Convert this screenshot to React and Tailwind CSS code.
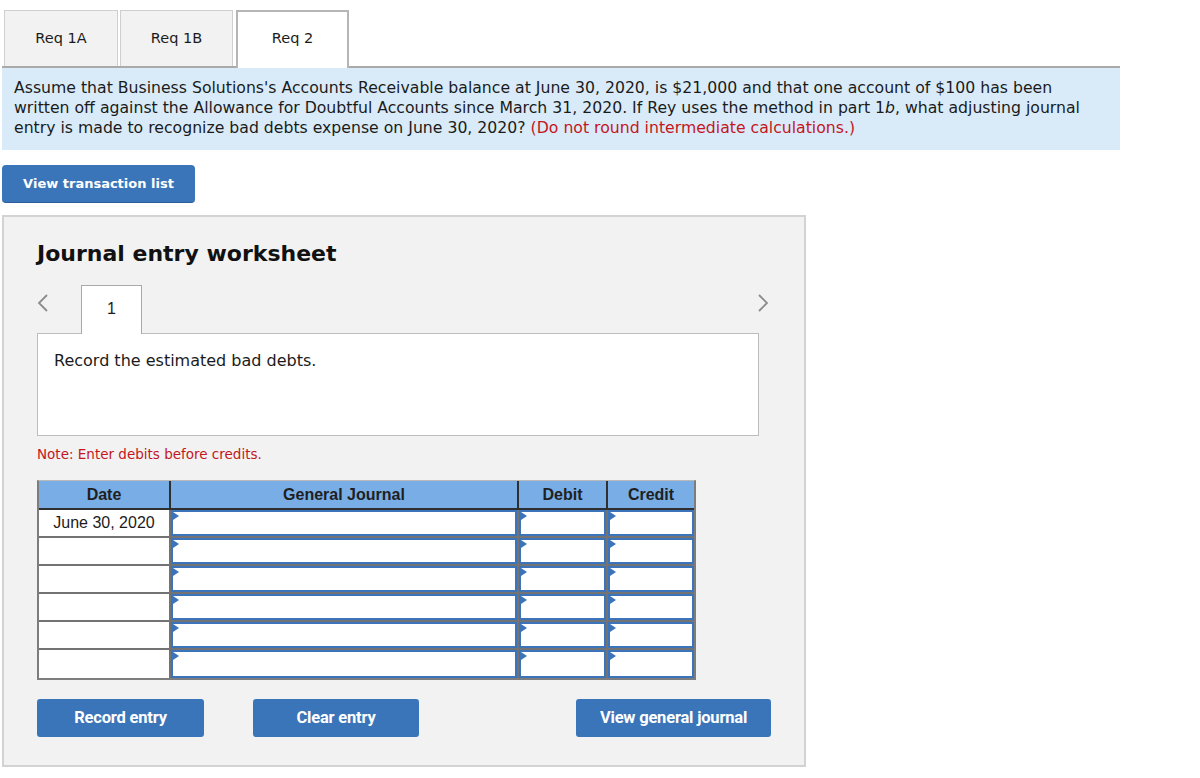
import React from "react";

const Arrow = () => (
  <span className="absolute left-0 top-0 w-0 h-0 border-y-[4px] border-y-transparent border-l-[6px] border-l-[#3b74ba]" />
);

function InputCell({ w, last }) {
  return (
    <div className={`${w} h-full ${last ? "" : "border-r-2 border-[#737373]"}`}>
      <div className="relative h-full bg-white border-2 border-[#3b74ba]">
        <Arrow />
      </div>
    </div>
  );
}

export default function App() {
  const rows = ["June 30, 2020", "", "", "", "", ""];

  return (
    <div className="w-[1200px] h-[778px] bg-white text-[#1b1b1b] font-['DejaVu_Sans',sans-serif]">
      {/* TOP TABS + QUESTION */}
      <div className="w-[1118px] ml-[2px] pt-[10px]">
        <div className="flex gap-[2px] pl-[2px] border-b-2 border-[#aaaaaa]">
          <div className="w-[114px] h-[56px] flex items-center justify-center bg-[#f2f2f2] border border-[#cfcfcf] border-b-0 text-[14.5px]">
            Req 1A
          </div>
          <div className="w-[113px] h-[56px] flex items-center justify-center bg-[#f2f2f2] border border-[#cfcfcf] border-b-0 text-[14.5px]">
            Req 1B
          </div>
          <div className="w-[113px] h-[58px] -mb-[2px] ml-[1px] flex items-center justify-center bg-white border-2 border-[#b5b5b5] border-b-0 text-[14.5px] pb-[2px]">
            Req 2
          </div>
        </div>
        <div className="bg-[#d9ebf9] pl-[12px] pt-[10px] pb-[12px] text-[15.7px] leading-[20px]">
          Assume that Business Solutions's Accounts Receivable balance at June 30, 2020, is $21,000 and that one account of $100 has been
          <br />
          written off against the Allowance for Doubtful Accounts since March 31, 2020. If Rey uses the method in part 1<i>b</i>, what adjusting journal
          <br />
          entry is made to recognize bad debts expense on June 30, 2020?{" "}
          <span className="text-[#c4161c]">(Do not round intermediate calculations.)</span>
        </div>
      </div>

      {/* TRANSACTION LIST BUTTON */}
      <button className="mt-[15px] ml-[2px] w-[193px] h-[38px] rounded-[4px] bg-[#3a75ba] text-white font-bold text-[13px] border-b border-[#2d5f9c]">
        View transaction list
      </button>

      {/* WORKSHEET */}
      <div className="mt-[12px] ml-[2px] w-[804px] h-[552px] bg-[#f2f2f2] border-2 border-[#d3d3d3] pl-[33px]">
        <h2 className="pt-[23px] text-[22px] leading-[28px] font-bold text-[#111]">
          Journal entry worksheet
        </h2>

        <div className="mt-[17px] w-[732px] h-[48px] flex items-start">
          <svg width="12" height="20" viewBox="0 0 12 20" className="mt-[8px]">
            <path d="M10 2 L2 10 L10 18" fill="none" stroke="#8c8c8c" strokeWidth="1.8" />
          </svg>
          <div className="ml-[32px] w-[61px] h-[49px] bg-white border border-[#a9a9a9] border-b-0 flex items-center justify-center text-[16px] font-['Liberation_Sans',sans-serif] pb-[2px]">
            1
          </div>
          <svg width="12" height="20" viewBox="0 0 12 20" className="ml-auto mt-[8px]">
            <path d="M2 2 L10 10 L2 18" fill="none" stroke="#8c8c8c" strokeWidth="1.8" />
          </svg>
        </div>
        <div className="w-[722px] h-[103px] bg-white border border-[#bdbdbd] pl-[16px] pt-[17px] text-[16px] leading-[20px]">
          Record the estimated bad debts.
        </div>

        <p className="mt-[8px] text-[13.5px] leading-[20px] text-[#c4161c]">
          Note: Enter debits before credits.
        </p>

        {/* TABLE */}
        <div className="mt-[16px] w-[659px] border-2 border-t border-[#7d7d7d] border-t-[#b8b8b8] font-['Liberation_Sans',sans-serif] text-[16px]">
          <div className="flex h-[29px] bg-[#78ade6] border-b-2 border-[#2f2f2f] font-bold text-[#1f1f1f]">
            <div className="w-[132px] flex items-center justify-center border-r-2 border-[#2f2f2f]">Date</div>
            <div className="w-[348px] flex items-center justify-center border-r-2 border-[#2f2f2f]">General Journal</div>
            <div className="w-[89px] flex items-center justify-center border-r-2 border-[#2f2f2f]">Debit</div>
            <div className="flex-1 flex items-center justify-center">Credit</div>
          </div>
          {rows.map((d, i) => (
            <div
              key={i}
              className={`flex h-[28px] ${i < rows.length - 1 ? "border-b-2 border-[#737373]" : ""}`}
            >
              <div className="w-[132px] bg-white border-r-2 border-[#737373] flex items-center justify-center">
                {d}
              </div>
              <InputCell w="w-[348px]" />
              <InputCell w="w-[89px]" />
              <InputCell w="flex-1" last />
            </div>
          ))}
        </div>

        {/* ACTIONS */}
        <div className="mt-[19px] w-[734px] flex font-['Roboto',sans-serif] font-bold text-[16.5px] text-white">
          <button className="w-[167px] h-[38px] rounded-[3px] bg-[#3a75ba] tracking-[-0.2px]">Record entry</button>
          <button className="ml-[49px] w-[166px] h-[38px] rounded-[3px] bg-[#3a75ba] tracking-[-0.2px]">Clear entry</button>
          <button className="ml-auto w-[195px] h-[38px] rounded-[3px] bg-[#3a75ba] tracking-[-0.2px]">View general journal</button>
        </div>
      </div>
    </div>
  );
}
